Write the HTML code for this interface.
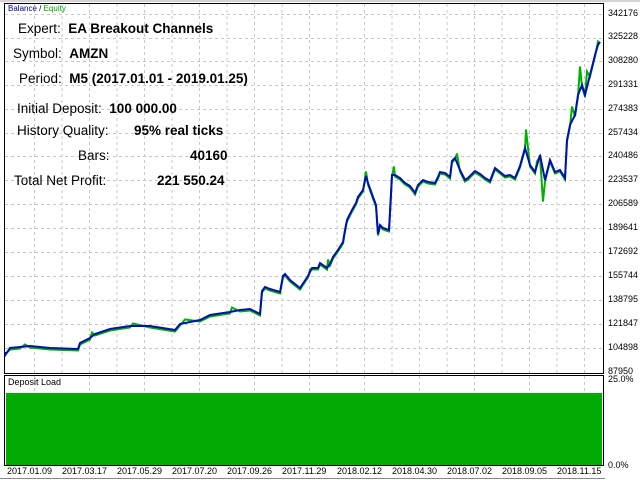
<!DOCTYPE html>
<html><head><style>
body{margin:0;width:640px;height:480px;background:#fff;overflow:hidden;font-family:"Liberation Sans",sans-serif;position:relative}
.t{position:absolute;font-size:13.5px;color:#000;white-space:nowrap}
.b{font-weight:bold}
.ax{position:absolute;font-size:9px;color:#000;font-family:"Liberation Sans",sans-serif;white-space:nowrap}
</style></head><body>
<svg width="640" height="480" style="position:absolute;left:0;top:0">
<g stroke="#c8c8c8" stroke-dasharray="3,3" stroke-width="1">
<line x1="5" x2="603" y1="14.5" y2="14.5"/><line x1="5" x2="603" y1="38.5" y2="38.5"/><line x1="5" x2="603" y1="61.5" y2="61.5"/><line x1="5" x2="603" y1="85.5" y2="85.5"/><line x1="5" x2="603" y1="109.5" y2="109.5"/><line x1="5" x2="603" y1="133.5" y2="133.5"/><line x1="5" x2="603" y1="156.5" y2="156.5"/><line x1="5" x2="603" y1="180.5" y2="180.5"/><line x1="5" x2="603" y1="204.5" y2="204.5"/><line x1="5" x2="603" y1="228.5" y2="228.5"/><line x1="5" x2="603" y1="252.5" y2="252.5"/><line x1="5" x2="603" y1="276.5" y2="276.5"/><line x1="5" x2="603" y1="300.5" y2="300.5"/><line x1="5" x2="603" y1="324.5" y2="324.5"/><line x1="5" x2="603" y1="348.5" y2="348.5"/>
<path d="M34.5 4V373M62 4V373M89.5 4V373M117 4V373M144.5 4V373M172 4V373M199.5 4V373M227 4V373M254.5 4V373M282 4V373M309.5 4V373M337 4V373M364.5 4V373M392 4V373M419.5 4V373M447 4V373M474.5 4V373M502 4V373M529.5 4V373M557 4V373M584.5 4V373"/>
<path d="M34.5 376V465M89.5 376V465M144.5 376V465M199.5 376V465M254.5 376V465M309.5 376V465M364.5 376V465M419.5 376V465M474.5 376V465M529.5 376V465M584.5 376V465"/>
</g>
<rect x="4.5" y="3.5" width="599" height="370" fill="none" stroke="#000"/>
<rect x="4.5" y="375.5" width="599" height="90" fill="none" stroke="#000"/>
<line x1="0" x2="640" y1="1" y2="1" stroke="#aaa"/>
<line x1="0" x2="605" y1="478.5" y2="478.5" stroke="#888"/>
<rect x="6" y="393" width="596" height="72" fill="#00aa00"/>
<g fill="none" stroke-linejoin="miter">
<polyline stroke="#00b000" stroke-width="2" transform="translate(0,1.5)" points="6,352 10,348 20,347 25,343 30,346 50,348 78,349 80,343 90,338 92,331 95,334 110,329 130,326 133,322 150,326 175,330 180,324 185,318 200,320 210,315 230,312 232,306 240,310 250,309 260,314 262,291 265,287 270,289 280,292 283,276 285,274 290,280 300,288 302,285 308,276 310,268 312,268 318,268 320,263 327,268 328,258 330,264 333,257 338,250 343,242 345,230 347,220 352,210 356,203 358,197 363,190 366,170 368,183 373,197 376,205 378,234 380,225 383,228 389,230 390,212 392,175 394,165 395,175 400,178 405,183 410,186 413,190 415,193 418,185 423,180 428,182 435,183 438,177 440,172 445,173 450,177 452,161 455,158 457,152 460,170 465,180 468,178 475,171 480,174 485,178 490,181 495,168 500,172 505,176 510,175 515,178 520,166 525,148 526,128 530,165 535,172 537,160 540,155 543,200 545,180 550,160 555,172 560,170 565,178 567,140 570,125 572,105 575,115 578,95 580,65 582,85 585,95 587,70 590,75 595,55 598,40 600,42"/>
<polyline stroke="#0010b0" stroke-width="2" points="6,352 6,354 10,348 20,347 30,346 50,348 78,349 80,343 90,338 95,334 110,329 130,326 150,326 175,330 180,324 200,320 210,315 230,312 240,310 250,309 260,314 262,291 265,287 270,289 280,292 283,276 285,274 290,280 300,288 302,285 308,276 312,268 318,268 320,263 327,268 330,264 333,257 338,250 343,242 345,230 347,220 352,210 356,203 358,197 363,190 366,176 368,183 373,197 376,205 378,234 380,225 383,228 389,230 390,212 392,175 395,175 400,178 405,183 410,186 413,190 415,193 418,185 423,180 428,182 435,183 438,177 440,172 445,173 450,177 452,161 455,158 460,170 465,180 468,178 475,171 480,174 485,178 490,181 495,168 500,172 505,176 510,175 515,178 520,166 525,148 530,165 535,172 540,155 545,180 550,160 555,172 560,170 565,178 567,140 570,125 575,115 578,95 582,85 585,95 590,75 595,55 598,45 600,42"/>
</g>
</svg>
<div class="ax" style="left:8px;top:4px;font-size:8px"><span style="color:#00008b">Balance</span> / <span style="color:#00a000">Equity</span></div>
<div class="ax" style="left:8px;top:377px">Deposit Load</div>
<div class="t" style="left:18px;top:21px">Expert:&nbsp; <span class="b">EA Breakout Channels</span></div>
<div class="t" style="left:13px;top:46px">Symbol:&nbsp; <span class="b">AMZN</span></div>
<div class="t" style="left:19px;top:71px">Period:&nbsp; <span class="b">M5 (2017.01.01 - 2019.01.25)</span></div>
<div class="t" style="left:17px;top:101px">Initial Deposit:&nbsp; <span class="b">100 000.00</span></div>
<div class="t" style="left:17px;top:123px">History Quality:</div><div class="t b" style="left:134px;top:123px">95% real ticks</div>
<div class="t" style="left:78px;top:148px">Bars:</div><div class="t b" style="left:190px;top:148px">40160</div>
<div class="t" style="left:14px;top:173px">Total Net Profit:</div><div class="t b" style="left:157px;top:173px">221 550.24</div>
<div class="ax" style="left:608px;top:8px">342176</div>
<div class="ax" style="left:608px;top:31px">325228</div>
<div class="ax" style="left:608px;top:55px">308280</div>
<div class="ax" style="left:608px;top:79px">291331</div>
<div class="ax" style="left:608px;top:103px">274383</div>
<div class="ax" style="left:608px;top:127px">257434</div>
<div class="ax" style="left:608px;top:150px">240486</div>
<div class="ax" style="left:608px;top:174px">223537</div>
<div class="ax" style="left:608px;top:198px">206589</div>
<div class="ax" style="left:608px;top:222px">189641</div>
<div class="ax" style="left:608px;top:246px">172692</div>
<div class="ax" style="left:608px;top:270px">155744</div>
<div class="ax" style="left:608px;top:294px">138795</div>
<div class="ax" style="left:608px;top:318px">121847</div>
<div class="ax" style="left:608px;top:342px">104898</div>
<div class="ax" style="left:608px;top:366px">87950</div>
<div class="ax" style="left:608px;top:374px">25.0%</div>
<div class="ax" style="left:608px;top:460px">0.0%</div>
<div class="ax" style="left:7px;top:466px">2017.01.09</div>
<div class="ax" style="left:62px;top:466px">2017.03.17</div>
<div class="ax" style="left:117px;top:466px">2017.05.29</div>
<div class="ax" style="left:172px;top:466px">2017.07.20</div>
<div class="ax" style="left:227px;top:466px">2017.09.26</div>
<div class="ax" style="left:282px;top:466px">2017.11.29</div>
<div class="ax" style="left:337px;top:466px">2018.02.12</div>
<div class="ax" style="left:392px;top:466px">2018.04.30</div>
<div class="ax" style="left:447px;top:466px">2018.07.02</div>
<div class="ax" style="left:502px;top:466px">2018.09.05</div>
<div class="ax" style="left:557px;top:466px">2018.11.15</div>
</body></html>
